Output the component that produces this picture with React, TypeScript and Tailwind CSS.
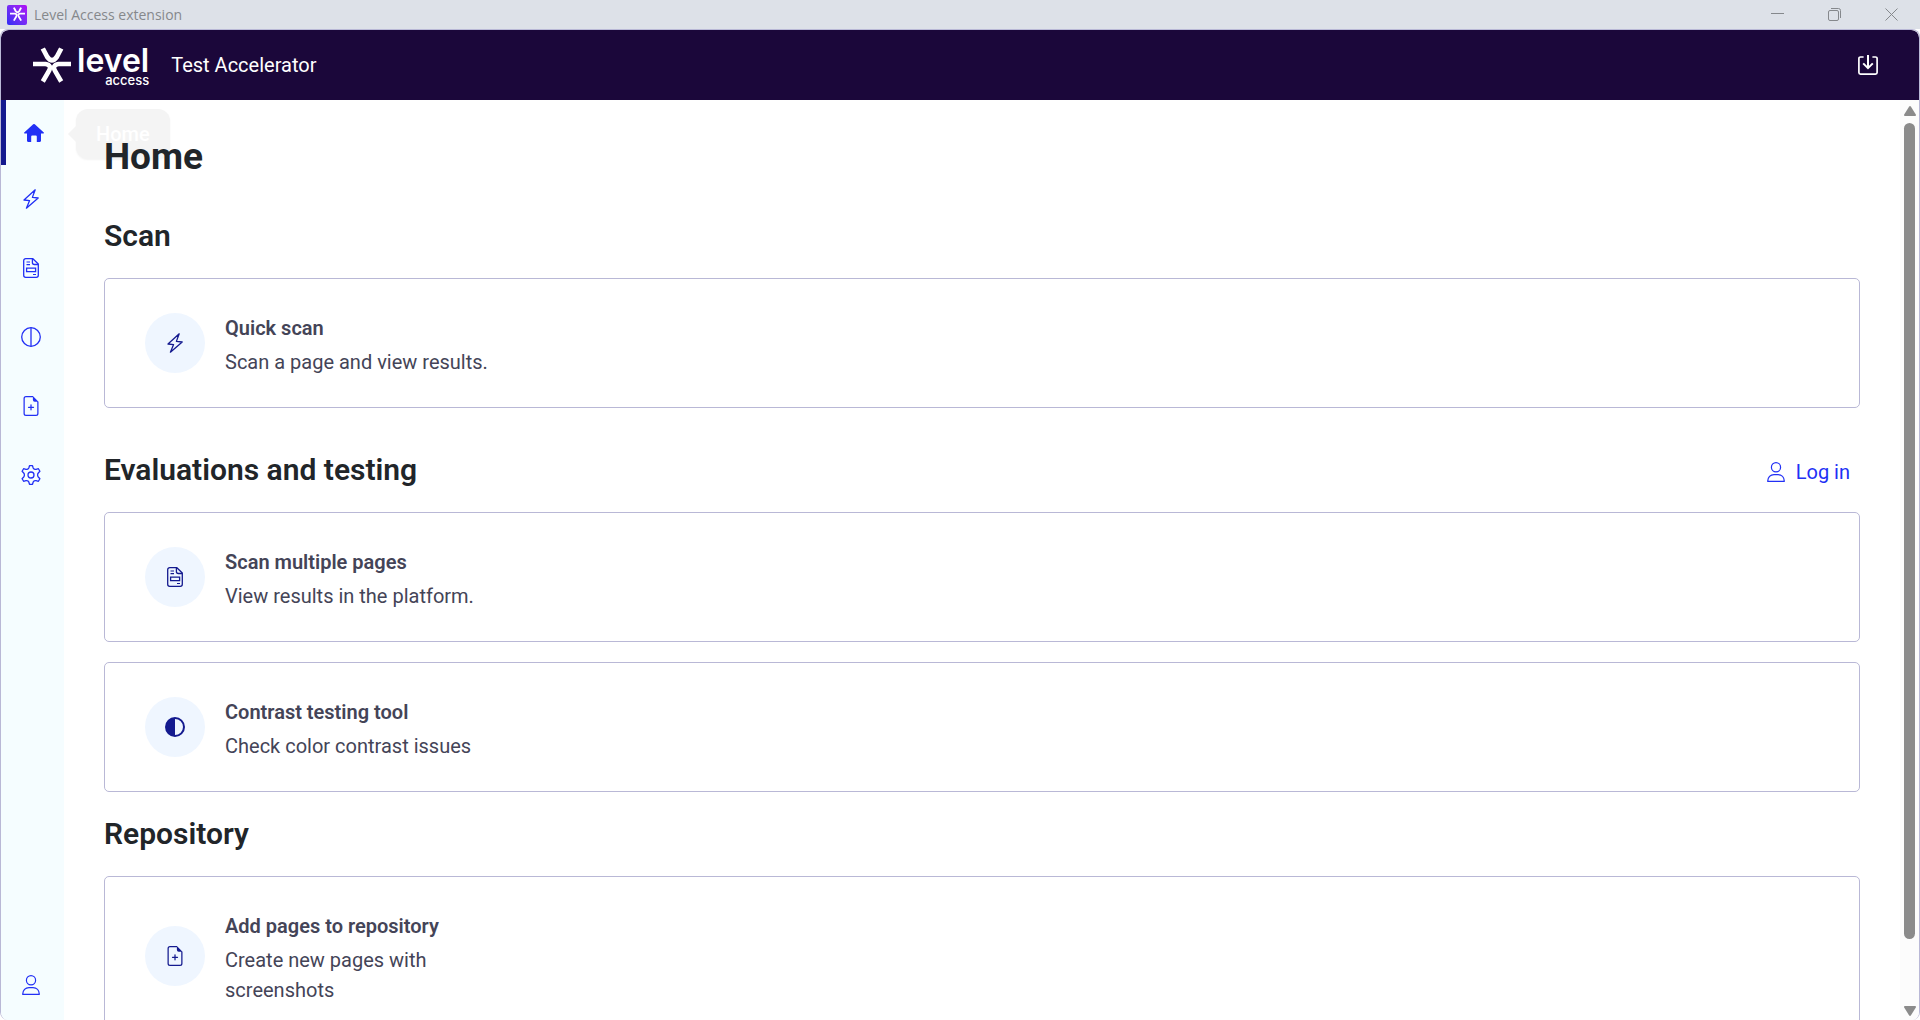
import type { ReactNode } from 'react';
import { BsFileEarmarkPlus } from 'react-icons/bs';

type IconProps = { className?: string };

function HomeIcon({ className }: IconProps) {
  return (
    <svg viewBox="0 0 20 20" className={className} fill="currentColor" aria-hidden="true">
      <path d="M9.2 1.3a1.200 1.200 0 0 1 1.600 0l9 8.200c.4.400.2 1.100-.4 1.100H17v7.200c0 .7-.5 1.200-1.200 1.200h-3V13.500a1 1 0 0 0-1-1H8.200a1 1 0 0 0-1 1V19h-3C3.500 19 3 18.500 3 17.800v-7.200H.6c-.6 0-.8-.7-.4-1.100z" />
    </svg>
  );
}

function LightningIcon({ className }: IconProps) {
  return (
    <svg viewBox="0 0 20 20" className={className} fill="none" stroke="currentColor" aria-hidden="true">
      <path
        d="M14.200 .8 3 11l5.600.6L5.400 19.200 17.200 9l-5.800-.6z"
        strokeWidth="1.3"
        strokeLinejoin="round"
      />
    </svg>
  );
}

function PageScanIcon({ className }: IconProps) {
  return (
    <svg viewBox="0 0 20 20" className={className} fill="none" stroke="currentColor" aria-hidden="true">
      <path
        d="M11.9.7H4.700a2 2 0 0 0-2 2v14.600a2 2 0 0 0 2 2h10.600a2 2 0 0 0 2-2V6z"
        strokeWidth="1.3"
        strokeLinejoin="round"
      />
      <path d="M11.400.7v3.800a2 2 0 0 0 2 2h3.800" strokeWidth="1.3" />
      <path d="M5.500 4h3.500M5.500 6.600h3.500M12 16.500h3" strokeWidth="1.2" />
      <path d="M5.600 10.200h9v3.400h-9z" strokeWidth="1.3" />
    </svg>
  );
}

function SplitCircleIcon({ className }: IconProps) {
  return (
    <svg viewBox="0 0 20 20" className={className} fill="none" stroke="currentColor" aria-hidden="true">
      <circle cx="10" cy="10" r="9.300" strokeWidth="1.3" />
      <path d="M10 .7v18.600" strokeWidth="1.3" />
    </svg>
  );
}

function HalfCircleIcon({ className }: IconProps) {
  return (
    <svg viewBox="0 0 20 20" className={className} aria-hidden="true">
      <circle cx="10" cy="10" r="9" fill="none" stroke="currentColor" strokeWidth="2" />
      <path d="M10 1a9 9 0 0 0 0 18z" fill="currentColor" />
    </svg>
  );
}

function GearIcon({ className }: IconProps) {
  return (
    <svg viewBox="0 0 20 20" className={className} fill="none" stroke="currentColor" aria-hidden="true">
      <circle cx="10" cy="10" r="3" strokeWidth="1.3" />
      <path
        d="M8.500.7h3l.7 2.300q.3.900 1.200 1.200t1.700.1l2.300-.6 1.500 2.600-1.600 1.700q-.7.800-.7 2t.7 2l1.600 1.700-1.500 2.600-2.300-.6q-.9-.2-1.700.1t-1.200 1.200l-.7 2.300h-3l-.7-2.300q-.3-.9-1.200-1.200t-1.700-.1l-2.300.6-1.500-2.600 1.600-1.700q.7-.8.7-2t-.7-2L1.100 6.300l1.500-2.600 2.300.6q.9.200 1.700-.1t1.200-1.200z"
        strokeWidth="1.3"
        strokeLinejoin="round"
      />
    </svg>
  );
}

function PersonIcon({ className }: IconProps) {
  return (
    <svg viewBox="0 0 20 20" className={className} fill="none" stroke="currentColor" aria-hidden="true">
      <circle cx="10" cy="5.200" r="4.600" strokeWidth="1.2" />
      <path
        d="M1.700 19.300c0-4.200 2.800-6.700 6.300-6.700h4c3.500 0 6.300 2.500 6.300 6.700z"
        strokeWidth="1.3"
        strokeLinejoin="round"
      />
    </svg>
  );
}

function DownloadIcon({ className }: IconProps) {
  return (
    <svg viewBox="0 0 20 20" className={className} fill="none" stroke="currentColor" aria-hidden="true">
      <path
        d="M5.600 2H2.500A1.600 1.600 0 0 0 .9 3.600v13.900a1.600 1.600 0 0 0 1.600 1.600h15a1.600 1.600 0 0 0 1.600-1.600V3.600A1.600 1.600 0 0 0 17.500 2h-3.100"
        strokeWidth="1.7"
      />
      <path d="M10 0v13M5.200 8.400l4.800 4.800 4.800-4.800" strokeWidth="2" />
    </svg>
  );
}

function StarMark({ className }: IconProps) {
  return (
    <svg viewBox="0 0 38 36" className={className} fill="none" stroke="currentColor" aria-hidden="true">
      <path d="M9.800 1.500 14.300 10Q19 16.500 23.700 10L28.200 1.500" strokeWidth="4.800" />
      <path d="M0 17H12.500Q19.500 18 15.600 24.500L9.800 34.500" strokeWidth="4.600" />
      <path d="M38 17H25.500Q18.500 18 22.400 24.500L28.200 34.500" strokeWidth="4.600" />
    </svg>
  );
}

const NAV_ITEMS: { label: string; icon: ReactNode }[] = [
  { label: 'Quick scan', icon: <LightningIcon className="size-5" /> },
  { label: 'Scan multiple pages', icon: <PageScanIcon className="size-5" /> },
  { label: 'Contrast testing tool', icon: <SplitCircleIcon className="size-5" /> },
  { label: 'Add pages to repository', icon: <BsFileEarmarkPlus className="size-5" /> },
  { label: 'Settings', icon: <GearIcon className="size-5" /> },
];

function TitleBar() {
  return (
    <div className="flex h-[29px] shrink-0 items-center justify-between bg-[#dde1e8] pl-[7px] text-[#85888c]">
      <div className="flex items-center gap-[7px]">
        <span className="flex size-5 items-center justify-center rounded-xs bg-linear-to-tr from-[#2b2bf5] to-[#b100f5] text-white">
          <StarMark className="w-[15px]" />
        </span>
        <span className="font-['Open_Sans',sans-serif] text-sm">Level Access extension</span>
      </div>
      <div className="flex h-full">
        <button aria-label="Minimize" className="flex w-[57px] items-center justify-center">
          <svg viewBox="0 0 13 13" className="size-[13px]" stroke="currentColor">
            <path d="M0 5.500h13" />
          </svg>
        </button>
        <button aria-label="Restore" className="flex w-[57px] items-center justify-center">
          <svg viewBox="0 0 13 13" className="size-[13px]" fill="none" stroke="currentColor">
            <rect x=".5" y="2.500" width="10" height="10" rx="1.500" />
            <path d="M3 .5h7.500a2 2 0 0 1 2 2V10" />
          </svg>
        </button>
        <button aria-label="Close" className="flex w-[57px] items-center justify-center">
          <svg viewBox="0 0 13 13" className="size-[13px]" stroke="currentColor">
            <path d="m.5.5 12 12m0-12-12 12" />
          </svg>
        </button>
      </div>
    </div>
  );
}

function AppHeader() {
  return (
    <header className="flex h-[70px] shrink-0 items-center justify-between rounded-t-lg bg-[#1b073a] pr-[41px] pl-8 text-white">
      <div className="flex items-center">
        <a href="#" aria-label="Level Access" className="flex items-center gap-[6px]">
          <StarMark className="h-9 w-[38px]" />
          <span className="flex flex-col items-end pt-1 font-['Inter',sans-serif]">
            <span className="text-[32px] leading-[26px] font-semibold">level</span>
            <span className="text-[13px] leading-3 font-medium">access</span>
          </span>
        </a>
        <span className="ml-[22px] text-xl">Test Accelerator</span>
      </div>
      <button aria-label="Export">
        <DownloadIcon className="size-5" />
      </button>
    </header>
  );
}

function Sidebar() {
  return (
    <nav className="flex w-[63px] shrink-0 flex-col bg-[#f5fdff] text-[#2230f5]">
      <div className="relative">
        <a
          href="#"
          aria-current="page"
          aria-label="Home"
          className="flex h-[65px] items-center border-l-5 border-[#141a8f] pl-[18px]"
        >
          <HomeIcon className="size-5" />
        </a>
        <div
          role="tooltip"
          className="absolute top-[9px] left-[75px] flex h-[50px] items-center rounded-xl bg-[#f4f4f4] px-5 text-xl font-medium text-white shadow-xs"
        >
          <span className="absolute -left-2 border-y-8 border-r-8 border-y-transparent border-r-[#f4f4f4]" />
          Home
        </div>
      </div>
      {NAV_ITEMS.map((item) => (
        <a
          key={item.label}
          href="#"
          aria-label={item.label}
          className="flex h-[69px] pt-6 pl-5"
        >
          {item.icon}
        </a>
      ))}
      <a href="#" aria-label="Account" className="mt-auto flex h-[69px] pt-6 pl-5">
        <PersonIcon className="size-5" />
      </a>
    </nav>
  );
}

function ActionCard({ icon, title, text }: { icon: ReactNode; title: string; text: string }) {
  return (
    <a
      href="#"
      className="flex items-center gap-5 rounded-[5px] border border-[#b9b8d6] px-10 py-[34px] text-xl leading-[30px] text-[#444457]"
    >
      <span className="flex size-[60px] shrink-0 items-center justify-center rounded-full bg-[#eff6ff] text-[#141a8f]">
        {icon}
      </span>
      <span className="-mb-1 flex max-w-[270px] flex-col gap-1">
        <strong className="font-semibold whitespace-nowrap">{title}</strong>
        <span>{text}</span>
      </span>
    </a>
  );
}

function Scrollbar() {
  return (
    <div className="flex w-[19px] shrink-0 flex-col items-center bg-[#fcfcfc] pt-[6px] pb-1 text-[#8b8b8b]" aria-hidden="true">
      <svg viewBox="0 0 12 10" className="h-[10px] w-3" fill="currentColor">
        <path d="M5 .8a1.200 1.200 0 0 1 2 0l4.800 7.700a1 1 0 0 1-.8 1.500H1a1 1 0 0 1-.8-1.500z" />
      </svg>
      <div className="mt-[7px] mb-[67px] w-[11px] flex-1 rounded-full bg-[#8b8b8b]" />
      <svg viewBox="0 0 12 10" className="h-[10px] w-3" fill="currentColor">
        <path d="M5 9.200a1.200 1.200 0 0 0 2 0l4.800-7.700A1 1 0 0 0 11 0H1a1 1 0 0 0-.8 1.500z" />
      </svg>
    </div>
  );
}

export default function App() {
  return (
    <div className="flex h-screen flex-col bg-white font-['Roboto',sans-serif]">
      <TitleBar />
      <div className="flex min-h-0 flex-1 flex-col overflow-hidden rounded-lg border border-b-0 border-[#b9b8d6]">
        <AppHeader />
        <div className="flex min-h-0 flex-1">
          <Sidebar />
          <main className="relative min-w-0 flex-1 overflow-hidden px-10 pt-[34px] text-[#212529]">
            <h1 className="text-[37px] leading-[45px] font-bold">Home</h1>

            <section className="mt-[39px]">
              <h2 className="mb-6 text-3xl font-semibold">Scan</h2>
              <ActionCard
                icon={<LightningIcon className="size-5" />}
                title="Quick scan"
                text="Scan a page and view results."
              />
            </section>

            <section className="mt-11">
              <div className="mb-6 flex items-end justify-between">
                <h2 className="text-3xl font-semibold">Evaluations and testing</h2>
                <button className="flex items-center gap-[10px] pr-[10px] text-xl leading-8 text-[#2230f5]">
                  <PersonIcon className="size-5" />
                  Log in
                </button>
              </div>
              <div className="flex flex-col gap-5">
                <ActionCard
                  icon={<PageScanIcon className="size-5" />}
                  title="Scan multiple pages"
                  text="View results in the platform."
                />
                <ActionCard
                  icon={<HalfCircleIcon className="size-5" />}
                  title="Contrast testing tool"
                  text="Check color contrast issues"
                />
              </div>
            </section>

            <section className="mt-6">
              <h2 className="mb-6 text-3xl font-semibold">Repository</h2>
              <ActionCard
                icon={<BsFileEarmarkPlus className="size-5" />}
                title="Add pages to repository"
                text="Create new pages with screenshots"
              />
            </section>
          </main>
          <Scrollbar />
        </div>
      </div>
    </div>
  );
}
